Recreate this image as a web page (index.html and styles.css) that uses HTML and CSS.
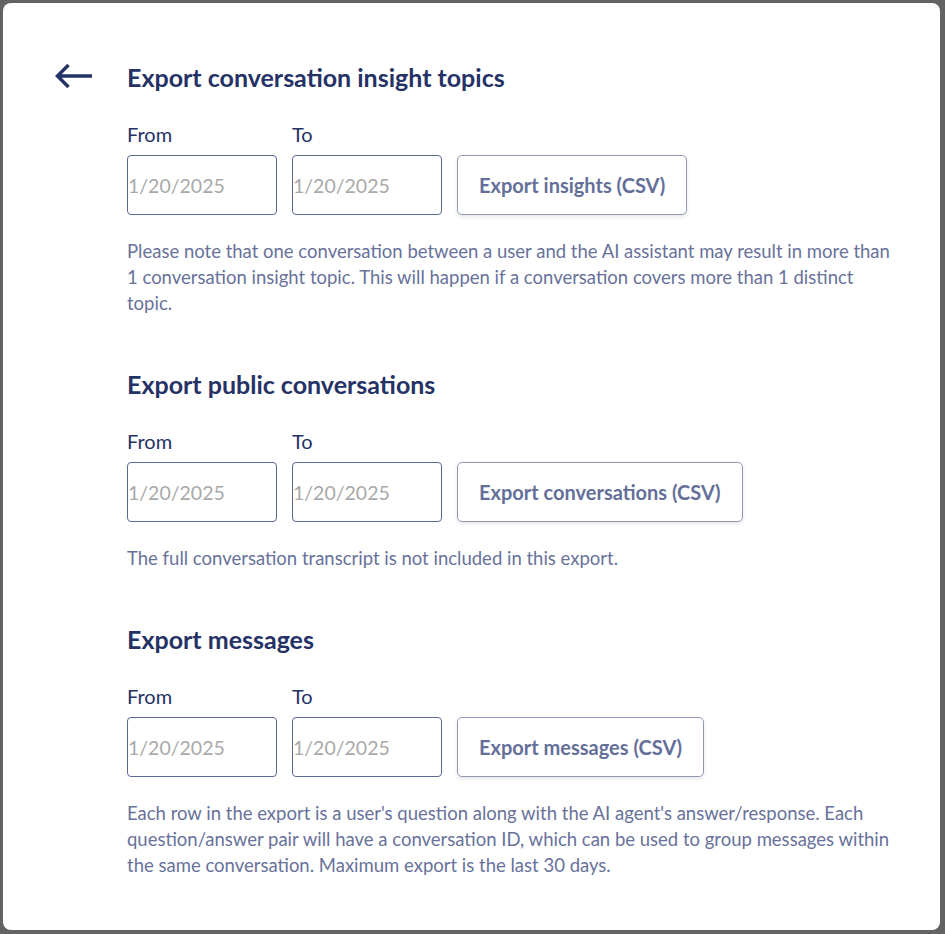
FILE: index.html
```html
<!DOCTYPE html>
<html lang="en">
<head>
    <meta charset="UTF-8">
    <title>Export</title>
    <link rel="stylesheet" href="styles.css">
</head>
<body>
    <div class="backdrop">
        <div class="modal">
            <button class="back-btn" aria-label="Back">
                <svg width="40" height="28" viewBox="0 0 40 28">
                    <path d="M38 13H3.5M14.5 2L3.5 13L14.5 24" fill="none" stroke="#253265" stroke-width="3.5"/>
                </svg>
            </button>

            <div class="content">
                <div class="export-section">
                    <h2 class="section-title">Export conversation insight topics</h2>
                    <div class="export-row">
                        <div class="field">
                            <label>From</label>
                            <input type="text" class="date-input" placeholder="1/20/2025">
                        </div>
                        <div class="field">
                            <label>To</label>
                            <input type="text" class="date-input" placeholder="1/20/2025">
                        </div>
                        <button class="export-btn">Export insights (CSV)</button>
                    </div>
                    <p class="note">Please note that one conversation between a user and the AI assistant may result in more than 1 conversation insight topic. This will happen if a conversation covers more than 1 distinct topic.</p>
                </div>

                <div class="export-section">
                    <h2 class="section-title">Export public conversations</h2>
                    <div class="export-row">
                        <div class="field">
                            <label>From</label>
                            <input type="text" class="date-input" placeholder="1/20/2025">
                        </div>
                        <div class="field">
                            <label>To</label>
                            <input type="text" class="date-input" placeholder="1/20/2025">
                        </div>
                        <button class="export-btn">Export conversations (CSV)</button>
                    </div>
                    <p class="note">The full conversation transcript is not included in this export.</p>
                </div>

                <div class="export-section">
                    <h2 class="section-title">Export messages</h2>
                    <div class="export-row">
                        <div class="field">
                            <label>From</label>
                            <input type="text" class="date-input" placeholder="1/20/2025">
                        </div>
                        <div class="field">
                            <label>To</label>
                            <input type="text" class="date-input" placeholder="1/20/2025">
                        </div>
                        <button class="export-btn">Export messages (CSV)</button>
                    </div>
                    <p class="note">Each row in the export is a user's question along with the AI agent's answer/response. Each question/answer pair will have a conversation ID, which can be used to group messages within the same conversation. Maximum export is the last 30 days.</p>
                </div>
            </div>
        </div>
    </div>
</body>
</html>
```

FILE: styles.css
```css
* {
    margin: 0;
    padding: 0;
    box-sizing: border-box;
}

body {
    font-family: Lato, 'Liberation Sans', sans-serif;
    background: #636363;
    min-height: 100vh;
}

.backdrop {
    padding: 3px 5px 4px 3px;
}

.modal {
    background: #ffffff;
    border-radius: 8px;
    display: flex;
    padding: 59px 40px 52px 47px;
    min-height: 927px;
}

.back-btn {
    background: none;
    border: none;
    cursor: pointer;
    width: 77px;
    height: 28px;
    display: flex;
    align-items: flex-start;
    margin-top: 1px;
    padding-left: 4px;
}

.content {
    flex: 1;
}

.export-section {
    margin-bottom: 53px;
}

.export-section:last-child {
    margin-bottom: 0;
}

.section-title {
    font-size: 25px;
    font-weight: bold;
    line-height: 30px;
    color: #253265;
    margin-bottom: 29px;
}

.export-row {
    display: flex;
    align-items: flex-end;
    gap: 15px;
}

.field {
    display: flex;
    flex-direction: column;
    gap: 8px;
}

.field label {
    font-size: 20px;
    line-height: 26px;
    color: #253265;
}

.date-input {
    width: 150px;
    height: 60px;
    border: 1px solid #5d6894;
    border-radius: 4px;
    padding: 0;
    font-family: Lato, 'Liberation Sans', sans-serif;
    font-size: 19.5px;
    color: #333;
    background: #fff;
}

.date-input::placeholder {
    color: #a9a9a9;
}

.export-btn {
    height: 60px;
    padding: 0 21px;
    background: #fff;
    border: 1px solid #9098b6;
    border-radius: 5px;
    font-family: Lato, 'Liberation Sans', sans-serif;
    font-size: 20px;
    font-weight: bold;
    color: #646f99;
    cursor: pointer;
    box-shadow: 0 2px 4px rgba(0, 0, 0, 0.1);
}

.note {
    margin-top: 23px;
    max-width: 770px;
    font-size: 18.5px;
    line-height: 26px;
    color: #68729a;
}
```
